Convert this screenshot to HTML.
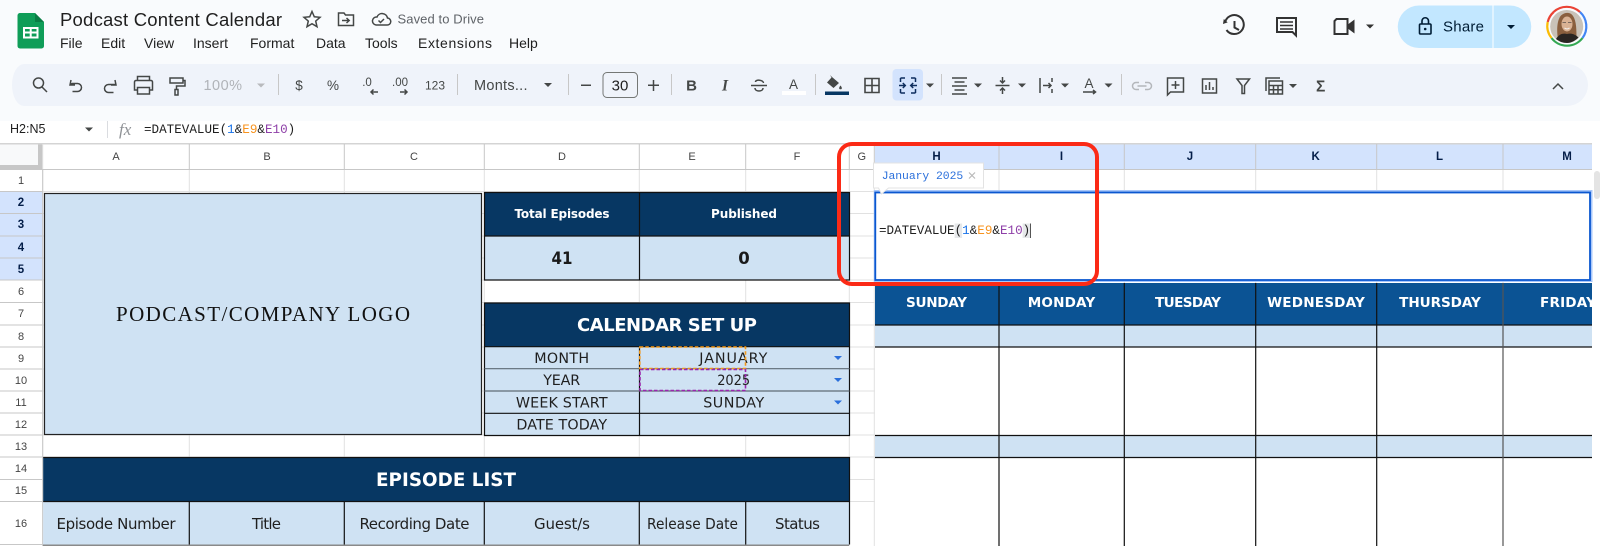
<!DOCTYPE html>
<html><head><meta charset="utf-8"><title>Podcast Content Calendar</title>
<style>
html,body{margin:0;padding:0;background:#fff;width:1600px;height:546px;overflow:hidden}
svg{display:block;font-family:"Liberation Sans",Arial,sans-serif}
text{white-space:pre}
.m{font-family:"Liberation Mono",monospace;font-size:12.6px}
.d{font-family:"DejaVu Sans",sans-serif;fill:#1f1f1f;font-size:14.3px;text-anchor:middle}
.b{font-family:"DejaVu Sans",sans-serif;font-weight:bold;fill:#fff;text-anchor:middle}
.h{font-size:11px;fill:#444;text-anchor:middle}
.s{font-size:11.5px;font-weight:bold;fill:#041e49;text-anchor:middle}
.i{fill:none;stroke:#444746;stroke-width:1.5}
.c{fill:#444746}
.g{stroke:#e1e1e1;stroke-width:1}
.k{stroke:#111;stroke-width:1.2}
</style></head><body>
<svg width="1600" height="546" viewBox="0 0 1600 546" xmlns="http://www.w3.org/2000/svg">
<rect width="1600" height="121" fill="#f9fbfd"/>
<rect x="0" y="121" width="1600" height="425" fill="#fff"/>

<!-- logo -->
<path d="M20 13h15l9 9v24a2.500 2.500 0 0 1-2.500 2.500H20A2.500 2.500 0 0 1 17.500 46V15.500A2.500 2.500 0 0 1 20 13z" fill="#0f9d58"/>
<path d="M35 13l9 9h-9z" fill="#0a7d45"/>
<path d="M23 27h15.500v11.500H23z M25 29v2.500h4.700V29z M31.700 29v2.500h4.800V29z M25 33.500V36.500h4.700v-3z M31.700 33.500V36.500h4.800v-3z" fill="#fff" fill-rule="evenodd"/>

<text x="60" y="26" font-size="18.500" fill="#1f1f1f" textLength="222">Podcast Content Calendar</text>
<g font-size="14" fill="#1f1f1f">
<text x="60" y="48">File</text><text x="101" y="48">Edit</text><text x="144" y="48">View</text><text x="193" y="48">Insert</text><text x="250" y="48">Format</text><text x="316" y="48">Data</text><text x="365" y="48">Tools</text><text x="418" y="48" textLength="74">Extensions</text><text x="509" y="48">Help</text>
</g>
<path class="i" d="M312 11.500l2.300 5.300 5.700.5-4.300 3.800 1.300 5.600-5-3-5 3 1.300-5.600-4.300-3.800 5.700-.5z"/>
<path class="i" d="M338.500 13h5.500l1.500 2h8v10.500h-15z M342 20.500h7 M346.500 18l2.700 2.500-2.700 2.500"/>
<path class="i" d="M376 25h11a3.500 3.500 0 0 0 .5-7 5.500 5.500 0 0 0-10.500-1 4 4 0 0 0-1 8z M378.500 20.500l2 2 3.500-3.500"/>
<text x="397.500" y="23.500" font-size="13" fill="#5f6368" textLength="86.500">Saved to Drive</text>

<!-- top-right -->
<path d="M1224.500 19l2.500 4.500h-5z" transform="rotate(-20 1224 21)" fill="#333"/>
<path fill="none" stroke="#333" stroke-width="2" d="M1225 22.500a9.500 9.500 0 1 1 1.500 7.500 M1234.500 21v6.500l4.500 2.500"/>
<path fill="none" stroke="#333" stroke-width="2" d="M1277 18h19v17.500l-3.500-3.500H1277z"/>
<path stroke="#333" stroke-width="1.500" d="M1280 22h13M1280 25.500h13M1280 29h13"/>
<path fill="none" stroke="#333" stroke-width="2" d="M1336.500 19h11v15h-13v-13z"/>
<path d="M1348.500 24l6-4.500v14l-6-4.500z" fill="#333"/>
<path d="M1366 24.500h8l-4 4z" fill="#333"/>
<path d="M1419 5.500h91a21 21 0 0 1 0 42.500h-91a21 21 0 0 1 0-42.500z" fill="#c2e7ff"/>
<rect x="1492.500" y="5.500" width="1" height="42.500" fill="#fff"/>
<rect x="1419.500" y="24" width="11.500" height="10" rx="1" fill="none" stroke="#001d35" stroke-width="1.600"/>
<path d="M1422 24v-3a3.200 3.200 0 0 1 6.500 0v3" fill="none" stroke="#001d35" stroke-width="1.600"/>
<circle cx="1425.200" cy="29" r="1.300" fill="#001d35"/>
<text x="1443" y="31.500" font-size="15" fill="#001d35" textLength="41">Share</text>
<path d="M1507 25h8l-4 4z" fill="#001d35"/>
<!-- avatar -->
<circle cx="1566.700" cy="26.500" r="16.500" fill="#c9c2b8"/>
<path d="M1558 39c-1.500-9-1-19 3-23.500 4-3.500 9.500-3.500 12 .5 3.500 5 3.500 14 3.500 23l-9 3z" fill="#8a5f3e"/>
<ellipse cx="1567" cy="24" rx="5.500" ry="7.500" fill="#d9b294"/>
<path d="M1556 39c3-5 7-6 11-5 4-1 8 0 11.500 3.500-3 3-7 5.500-11.500 5.500-4 0-8-1.500-11-4z" fill="#2a2522"/>
<path d="M1562.500 22.500h3.500M1568 22.500h3.500" stroke="#7a6a60" stroke-width="1"/>
<path d="M1564.500 28c1.600 1.200 3.400 1.200 5 0" stroke="#f4eee8" stroke-width="1.100" fill="none"/>
<g fill="none" stroke-width="2.200">
<path d="M1547.700 22a19.500 19.500 0 0 1 6-10" stroke="#ea4335"/>
<path d="M1553.500 12a19.500 19.500 0 0 1 26.500 0" stroke="#ea4335"/>
<path d="M1580 12a19.500 19.500 0 0 1 2.500 26" stroke="#4285f4"/>
<path d="M1582.500 38a19.500 19.500 0 0 1-31 0" stroke="#34a853"/>
<path d="M1551.500 38a19.500 19.500 0 0 1-3.800-16" stroke="#fbbc04"/>
</g>

<!-- toolbar -->
<path d="M24 64h1543a21 21 0 0 1 0 42H24a12 21 0 0 1-12-21 12 21 0 0 1 12-21z" fill="#eff3fa"/>
<rect x="892.500" y="69" width="30.500" height="31.500" rx="4" fill="#d3e3fd"/>
<g fill="#c7c7c7"><rect x="278" y="74" width="1" height="21"/><rect x="457" y="74" width="1" height="21"/><rect x="568" y="74" width="1" height="21"/><rect x="671" y="74" width="1" height="21"/><rect x="815" y="74" width="1" height="21"/><rect x="941" y="74" width="1" height="21"/><rect x="1121" y="74" width="1" height="21"/></g>

<circle cx="38.500" cy="83" r="5" class="i"/><path class="i" d="M42 87l5 5"/>
<path class="i" d="M71 83l-1 5h5 M70.500 87.500a4.500 4.500 0 0 1 2-1 h5a4 4 0 0 1 0 8h-5" transform="translate(0 -3)"/>
<path class="i" d="M115 83l1 5h-5 M115.500 87.500h-7a4 4 0 0 0 0 8h5" transform="translate(0 -3)"/>
<path class="i" d="M137.500 81v-4.500h12V81 M137 90h-2.500v-8a1.500 1.500 0 0 1 1.500-1.500h15a1.500 1.500 0 0 1 1.500 1.500v8H150 M137.500 87.500h12v6.500h-12z"/>
<path class="i" d="M170 78h13v5h-13z M183 80.500h2v5.500h-8.500v3 M175 89.500h3v5.500h-3z"/>
<text x="203.500" y="90" font-size="14.500" fill="#b0b3b8" textLength="38.500">100%</text>
<path d="M257 83.500h8l-4 4z" fill="#b8babd"/>
<text x="299" y="90" font-size="13.500" fill="#444746" text-anchor="middle">$</text>
<text x="333" y="90" font-size="13.500" fill="#444746" text-anchor="middle">%</text>
<text x="367" y="86" font-size="11.500" fill="#444746" text-anchor="middle">.0</text>
<path class="i" d="M378 92h-7 M373.500 89.500l-2.500 2.500 2.500 2.500"/>
<text x="400" y="86" font-size="11.500" fill="#444746" text-anchor="middle">.00</text>
<path class="i" d="M400 92h7 M404.500 89.500l2.500 2.500-2.500 2.500"/>
<text x="435" y="89.500" font-size="12" fill="#444746" text-anchor="middle">123</text>
<text x="474" y="90" font-size="14.500" fill="#444746" textLength="53.500">Monts...</text>
<path class="c" d="M544 83h8l-4 4z"/>
<rect x="581" y="84.500" width="10" height="1.500" fill="#444746"/>
<rect x="603" y="72.500" width="34.500" height="25" rx="4" fill="none" stroke="#747775" stroke-width="1"/>
<text x="620" y="90.500" font-size="15" fill="#1f1f1f" text-anchor="middle">30</text>
<path class="i" d="M648 85.300h11M653.500 80v11"/>
<text x="691.500" y="90.500" font-size="15" font-weight="bold" fill="#444746" text-anchor="middle">B</text>
<text x="725" y="90.500" font-size="15.500" font-weight="bold" font-style="italic" fill="#444746" text-anchor="middle" style="font-family:'Liberation Serif',serif">I</text>
<path class="i" d="M751 85.500h16 M763.500 83c0-3-8-4-8-1 M755 88c0 4 8 4 8 0"/>
<text x="793.500" y="89" font-size="13.500" fill="#444746" text-anchor="middle">A</text>
<rect x="782" y="91" width="24" height="4" fill="#fff"/>
<path d="M830 75l2 2 7 6-5.500 5-6.500-5.500 4.500-5z" fill="#444746"/>
<path d="M840.500 85.500c1.800 2.200 1.800 3.800 0 3.800s-1.800-1.600 0-3.800z" fill="#444746"/>
<rect x="825" y="91.500" width="24" height="3.500" fill="#073763"/>
<path fill="none" stroke="#444746" stroke-width="1.600" d="M865 78.500h14v14h-14z M872 78.500v14 M865 85.500h14"/>
<path fill="none" stroke="#0d2d5e" stroke-width="1.500" d="M900.500 78h4.500M900.500 78v4M900.500 89v4M900.500 93h4.500M915.500 78h-4.500M915.500 78v4M915.500 89v4M915.500 93h-4.500"/>
<path fill="none" stroke="#0d2d5e" stroke-width="1.500" d="M899 85.500h6M902.800 83l2.500 2.500-2.500 2.500M917 85.500h-6M913.200 83l-2.500 2.500 2.500 2.500"/>
<path class="c" d="M926 83.500h8l-4 4z"/>
<path fill="none" stroke="#444746" stroke-width="1.500" d="M952 78h15M954.500 82h10M952 86h15M954.500 90h10M952 94h15"/>
<path class="c" d="M974 83.500h8l-4 4z"/>
<path class="i" d="M995.500 85.500h14 M1002.500 77v5.500M1000 80.500l2.500 2.500 2.500-2.500M1002.500 94v-5.500M1000 90.500l2.500-2.500 2.500 2.500"/>
<path class="c" d="M1018 83.500h8l-4 4z"/>
<path class="i" d="M1040 78v15M1052 78v4M1052 89v4M1043 85.500h8M1048.500 83l2.500 2.500-2.500 2.500"/>
<path class="c" d="M1061 83.500h8l-4 4z"/>
<text x="1089" y="88" font-size="13.500" fill="#444746" text-anchor="middle">A</text>
<path class="i" d="M1083 92h12M1093 90l2.500 2-2.500 2"/>
<path class="c" d="M1104.500 83.500h8l-4 4z"/>
<path fill="none" stroke="#b4b7bb" stroke-width="1.500" d="M1139 82.500h-3a3.500 3.500 0 0 0 0 7h3M1145 82.500h3a3.500 3.500 0 0 1 0 7h-3M1137.500 86h9"/>
<path class="i" d="M1167.500 78h16v14h-13l-3 3z M1175.500 81v8M1171.500 85h8"/>
<path class="i" d="M1202.500 79h14v14h-14z"/><path stroke="#444746" stroke-width="1.500" d="M1206 90v-5M1209.500 90v-8M1213 90v-3"/>
<path class="i" d="M1237 79h12.500l-5 6.500v8h-2.500v-8z"/>
<path class="i" d="M1266 91V78h14 M1269 81h13.500v13H1269z M1269 85.500h13.500M1269 89.800h13.500M1273.500 85.500v8.500M1278 85.500v8.500"/>
<path class="c" d="M1289 84h8l-4 4z"/>
<text x="1320.700" y="91.500" font-size="15.500" font-weight="bold" fill="#444746" text-anchor="middle">Σ</text>
<path class="i" d="M1553 89l5-5 5 5"/>

<!-- formula bar -->
<text x="10" y="133" font-size="12.500" fill="#1f1f1f">H2:N5</text>
<path class="c" d="M85 127.500h8l-4 4z"/>
<rect x="107" y="121" width="1" height="17" fill="#dadce0"/>
<text x="119" y="135" font-size="17" font-style="italic" fill="#8f9296" style="font-family:'Liberation Serif',serif">fx</text>
<text x="144" y="133" class="m" fill="#1f1f1f">=DATEVALUE(<tspan fill="#1a73e8">1</tspan>&amp;<tspan fill="#f7931e">E9</tspan>&amp;<tspan fill="#8e3fa8">E10</tspan>)</text>

<!-- grid -->
<rect x="0" y="143" width="1592" height="1.500" fill="#d4d4d4"/>
<rect x="0" y="144.500" width="38" height="20.500" fill="#f8f9fa"/>
<rect x="38" y="144.500" width="4.700" height="25" fill="#c7c7c7"/>
<rect x="0" y="165" width="42" height="4.500" fill="#c7c7c7"/>
<rect x="875" y="144.500" width="717" height="25" fill="#d3e3fd"/>
<rect x="0" y="191.500" width="42.700" height="88.500" fill="#d3e3fd"/>
<g class="g">
<path d="M42.700 169.500H1592M42.700 191.500H1592M42.700 213.500H1592M42.700 236H1592M42.700 258H1592M42.700 280H1592M42.700 302.500H1592M42.700 325H1592M42.700 347H1592M42.700 369H1592M42.700 391H1592M42.700 413H1592M42.700 435H1592M42.700 457H1592M42.700 479.500H1592M42.700 501.500H1592"/>
<path d="M42.700 144V546M189.300 169V546M344.300 169V546M484.300 169V546M639.300 169V546M745.700 169V546M849.300 169V546M874.300 169V546M999 169V546M1124.300 169V546M1255.700 169V546M1376.700 169V546M1503 169V546"/>
</g>
<path stroke="#c7c7c7" d="M189.300 144v25M344.300 144v25M484.300 144v25M639.300 144v25M745.700 144v25M849.300 144v25M874.300 144v25M999 144v25M1124.300 144v25M1255.700 144v25M1376.700 144v25M1503 144v25M0 169.500h1592"/>
<path stroke="#c7c7c7" d="M0 191.500h42.700M0 213.500h42.700M0 236h42.700M0 258h42.700M0 280h42.700M0 302.500h42.700M0 325h42.700M0 347h42.700M0 369h42.700M0 391h42.700M0 413h42.700M0 435h42.700M0 457h42.700M0 479.500h42.700M0 501.500h42.700M0 544.500h42.700M42.700 169v377"/>
<g class="h"><text x="116" y="160">A</text><text x="267" y="160">B</text><text x="414" y="160">C</text><text x="562" y="160">D</text><text x="692" y="160">E</text><text x="797" y="160">F</text><text x="861.800" y="160">G</text></g>
<g class="s"><text x="936.500" y="160">H</text><text x="1061.500" y="160">I</text><text x="1190" y="160">J</text><text x="1315.700" y="160">K</text><text x="1439.500" y="160">L</text><text x="1567" y="160">M</text></g>
<g class="h"><text x="21" y="184">1</text><text x="21" y="295">6</text><text x="21" y="317">7</text><text x="21" y="340">8</text><text x="21" y="362">9</text><text x="21" y="384">10</text><text x="21" y="406">11</text><text x="21" y="428">12</text><text x="21" y="450">13</text><text x="21" y="472">14</text><text x="21" y="494">15</text><text x="21" y="527">16</text></g>
<g class="s"><text x="21" y="206">2</text><text x="21" y="228">3</text><text x="21" y="251">4</text><text x="21" y="273">5</text></g>

<!-- logo box -->
<rect x="44.500" y="193.500" width="437" height="241" fill="#cfe2f3" stroke="#222" stroke-width="1.200"/>
<text x="263" y="321" font-size="21" fill="#111" text-anchor="middle" textLength="294" style="font-family:'Liberation Serif',serif">PODCAST/COMPANY LOGO</text>

<!-- totals -->
<rect x="484.500" y="192" width="365" height="44" fill="#073763"/>
<rect x="484.500" y="236" width="365" height="44" fill="#cfe2f3"/>
<path class="k" d="M484.500 192.500H849.500V280H484.500z M484.500 236H849.500 M639.500 192V280" fill="none"/>
<text x="562" y="218" class="b" font-size="12" textLength="95">Total Episodes</text>
<text x="744" y="218" class="b" font-size="12" textLength="66">Published</text>
<text x="562" y="264" class="b" font-size="17" style="fill:#1a1a1a" textLength="21" lengthAdjust="spacingAndGlyphs">41</text>
<text x="744" y="264" class="b" font-size="17" style="fill:#1a1a1a" textLength="11.500" lengthAdjust="spacingAndGlyphs">0</text>

<!-- calendar setup -->
<rect x="484.500" y="303" width="365" height="44" fill="#073763"/>
<rect x="484.500" y="347" width="365" height="88.500" fill="#cfe2f3"/>
<path class="k" d="M484.500 303H849.500V435.500H484.500z M484.500 346.700H849.500 M484.500 413.300H849.500 M639.500 347V435.500" fill="none"/>
<path stroke="#5f6b76" stroke-width="1.200" d="M484.500 368.700H849.500M484.500 391H849.500"/>
<text x="667" y="331" class="b" font-size="18" textLength="180">CALENDAR SET UP</text>
<g class="d"><text x="561.700" y="363" textLength="55">MONTH</text><text x="561.700" y="385" textLength="37">YEAR</text><text x="561.700" y="407.500" textLength="91.700">WEEK START</text><text x="561.700" y="429.500" textLength="90.700">DATE TODAY</text><text x="733.300" y="363" textLength="68">JANUARY</text><text x="733.700" y="385" textLength="33" lengthAdjust="spacingAndGlyphs">2025</text><text x="733.700" y="407.500" textLength="61">SUNDAY</text></g>
<g fill="#2a6fdb"><path d="M834 356h8l-4 4z"/><path d="M834 378h8l-4 4z"/><path d="M834 400.500h8l-4 4z"/></g>
<rect x="639.800" y="347" width="105.700" height="21.500" fill="none" stroke="#f49a1a" stroke-width="1.600" stroke-dasharray="3.500 2"/>
<rect x="640" y="369.500" width="105.500" height="21" fill="none" stroke="#9b27af" stroke-width="1.600" stroke-dasharray="3.500 2"/>

<!-- episode list -->
<rect x="43.200" y="457.500" width="806" height="44" fill="#073763"/>
<rect x="43.200" y="501.500" width="806" height="43" fill="#cfe2f3"/>
<path class="k" d="M43.200 457.500H849.500V544.500 M43.200 501.500H849.500 M189.300 501.500V545M344.300 501.500V545M484.300 501.500V545M639.300 501.500V545M745.700 501.500V545" fill="none"/>
<rect x="43" y="544.500" width="806" height="1.500" fill="#8a8a8a"/>
<text x="446" y="486" class="b" font-size="18.300" textLength="140">EPISODE LIST</text>
<g class="d" style="font-size:15px"><text x="116" y="529" textLength="119">Episode Number</text><text x="266.500" y="529" textLength="29">Title</text><text x="414.500" y="529" textLength="110">Recording Date</text><text x="562" y="529" textLength="56">Guest/s</text><text x="692.500" y="529" textLength="91" lengthAdjust="spacingAndGlyphs">Release Date</text><text x="797.500" y="529" textLength="45">Status</text></g>

<!-- calendar -->
<rect x="875" y="283" width="717" height="42" fill="#0b5394"/>
<rect x="875" y="325" width="717" height="22" fill="#cfe2f3"/>
<rect x="875" y="347" width="717" height="88.500" fill="#fff"/>
<rect x="875" y="435.500" width="717" height="22" fill="#cfe2f3"/>
<rect x="875" y="457.500" width="717" height="88.500" fill="#fff"/>
<path stroke="#111" stroke-width="1.200" d="M875 325H1592M875 347H1592M875 435.500H1592M875 457.500H1592M999 283V546M1124.300 283V546M1255.700 283V546M1376.700 283V546"/>
<path stroke="#555" stroke-width="1.200" d="M1503 283V546"/>
<g class="b" font-size="13.600"><text x="936.500" y="307" textLength="61">SUNDAY</text><text x="1061.500" y="307" textLength="67.500">MONDAY</text><text x="1188" y="307" textLength="66">TUESDAY</text><text x="1316" y="307" textLength="97.700">WEDNESDAY</text><text x="1440" y="307" textLength="81.700">THURSDAY</text><text x="1568" y="307" textLength="56">FRIDAY</text></g>
<rect x="1592" y="144" width="8" height="402" fill="#fff"/>
<rect x="1594" y="171" width="6" height="28" rx="3" fill="#e4e4e4"/>

<!-- editor -->
<rect x="875.300" y="191.500" width="715.700" height="89" fill="#fff" stroke="#a8c7fa" stroke-width="3"/>
<rect x="875.300" y="192.500" width="714.700" height="87.500" fill="#fff" stroke="#0b57d0" stroke-width="1.800"/>
<rect x="954.600" y="223.500" width="7.500" height="14.500" fill="#e6e8ea"/>
<rect x="1022.600" y="223.500" width="7.500" height="14.500" fill="#e6e8ea"/>
<text x="879" y="234" class="m" fill="#1f1f1f">=DATEVALUE(<tspan fill="#1a73e8">1</tspan>&amp;<tspan fill="#f7931e">E9</tspan>&amp;<tspan fill="#8e3fa8">E10</tspan>)</text>
<rect x="1030" y="223.500" width="1" height="14.500" fill="#555"/>

<!-- tooltip -->
<path d="M873.500 163h110v25h-95l-7 6-3-6h-5z" fill="#fff" stroke="#e3e3e3" stroke-width="1"/>
<text x="881.700" y="179" font-size="11.400" fill="#2a6fdb" style="font-family:'Liberation Mono',monospace" textLength="81.500">January 2025</text>
<path d="M969 172.500l6 6m0-6l-6 6" stroke="#b9b9b9" stroke-width="1.200"/>

<!-- red annotation -->
<rect x="839" y="144" width="258" height="140" rx="13" fill="none" stroke="#fb2a16" stroke-width="4"/>
</svg>
</body></html>
